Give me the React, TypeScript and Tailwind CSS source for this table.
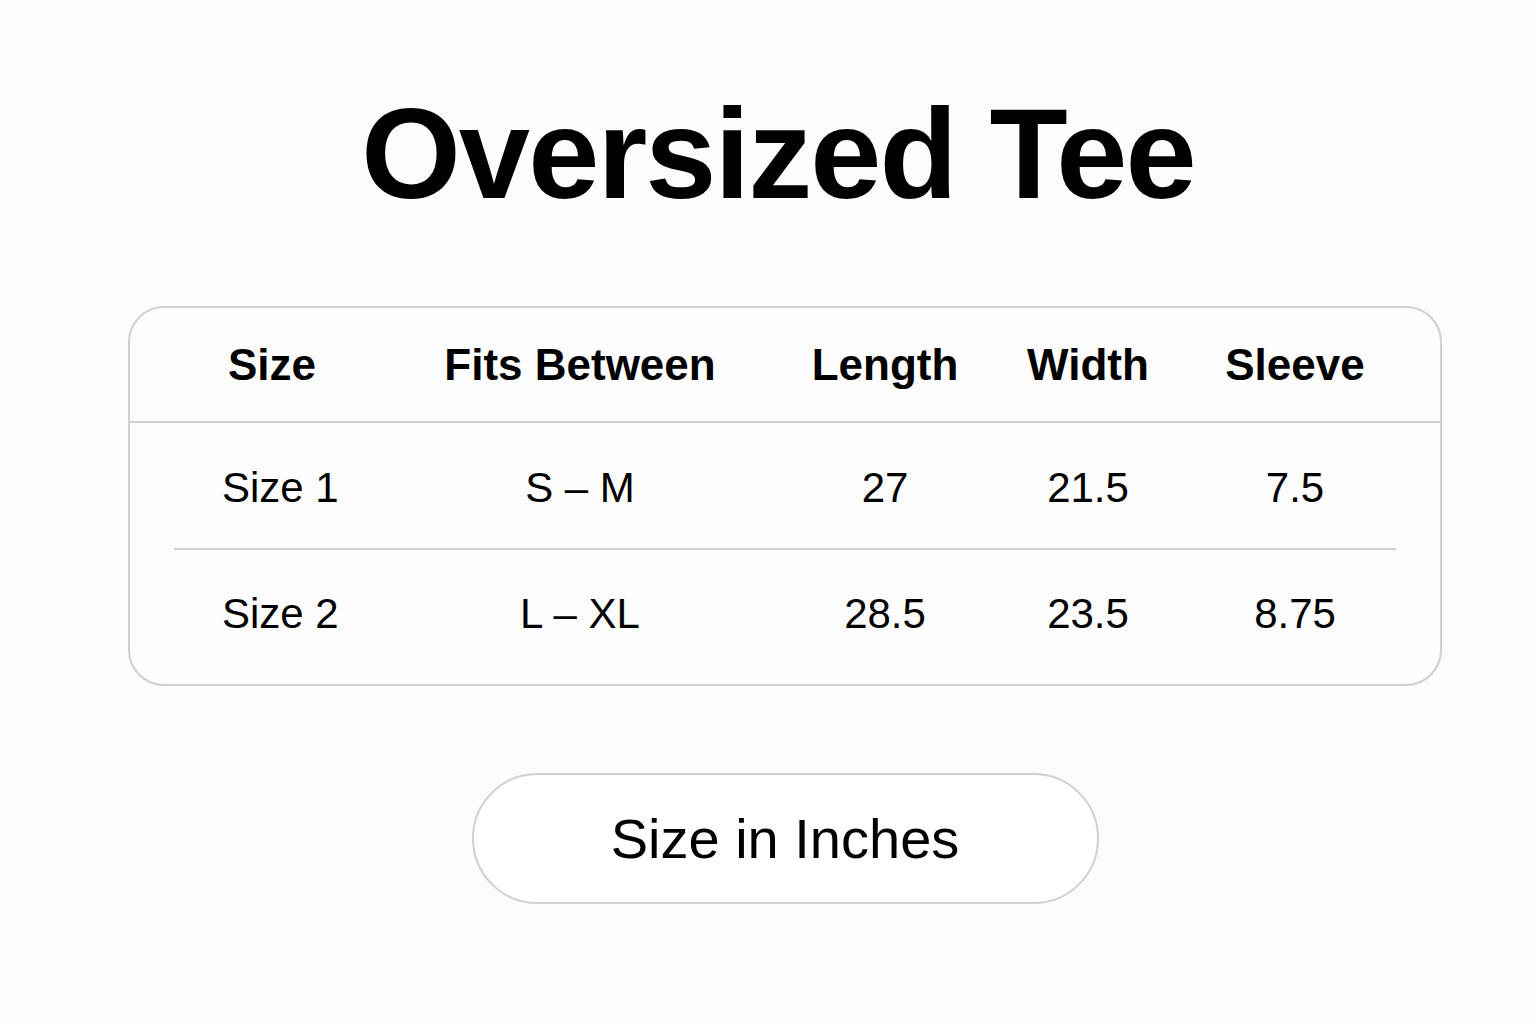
export default function App() {
  const rows = [
    ["Size 1", "S – M", "27", "21.5", "7.5"],
    ["Size 2", "L – XL", "28.5", "23.5", "8.75"],
  ]
  const headers = ["Size", "Fits Between", "Length", "Width", "Sleeve"]
  const cols = "grid grid-cols-[196px_420px_190px_216px_198px] px-[44px]"

  return (
    <div
      className="min-h-screen w-full bg-[#fcfcfc] text-black flex flex-col items-center pl-[34px]"
      style={{ fontFamily: '"Liberation Sans", Arial, sans-serif' }}
    >
      <h1 className="mt-[90px] pr-[14px] text-[128px] leading-none font-bold tracking-[-0.015em]">Oversized Tee</h1>

      <div className="mt-[88px] w-[1314px] h-[380px] rounded-[36px] border-2 border-[#d0d0d0] bg-[#fdfdfd] flex flex-col">
        <div className="h-[115px] border-b-2 border-[#d0d0d0]">
          <div className={`${cols} h-full items-center`}>
            {headers.map((h) => (
              <div key={h} className="text-center text-[44px] font-bold">
                {h}
              </div>
            ))}
          </div>
        </div>

        <div className={`${cols} h-[125px] items-center pt-[3px]`}>
          {rows[0].map((c, i) => (
            <div key={i} className={`text-[42px] ${i === 0 ? "pl-[48px] text-left" : "text-center"}`}>
              {c}
            </div>
          ))}
        </div>
        <div className="mx-[44px] h-[2px] bg-[#d0d0d0]" />
        <div className={`${cols} h-[132px] items-center pb-[6px]`}>
          {rows[1].map((c, i) => (
            <div key={i} className={`text-[42px] ${i === 0 ? "pl-[48px] text-left" : "text-center"}`}>
              {c}
            </div>
          ))}
        </div>
      </div>

      <div className="mt-[87px] w-[627px] h-[131px] rounded-full border-2 border-[#d0d0d0] bg-white flex items-center justify-center">
        <span className="text-[56px]">Size in Inches</span>
      </div>
    </div>
  )
}
